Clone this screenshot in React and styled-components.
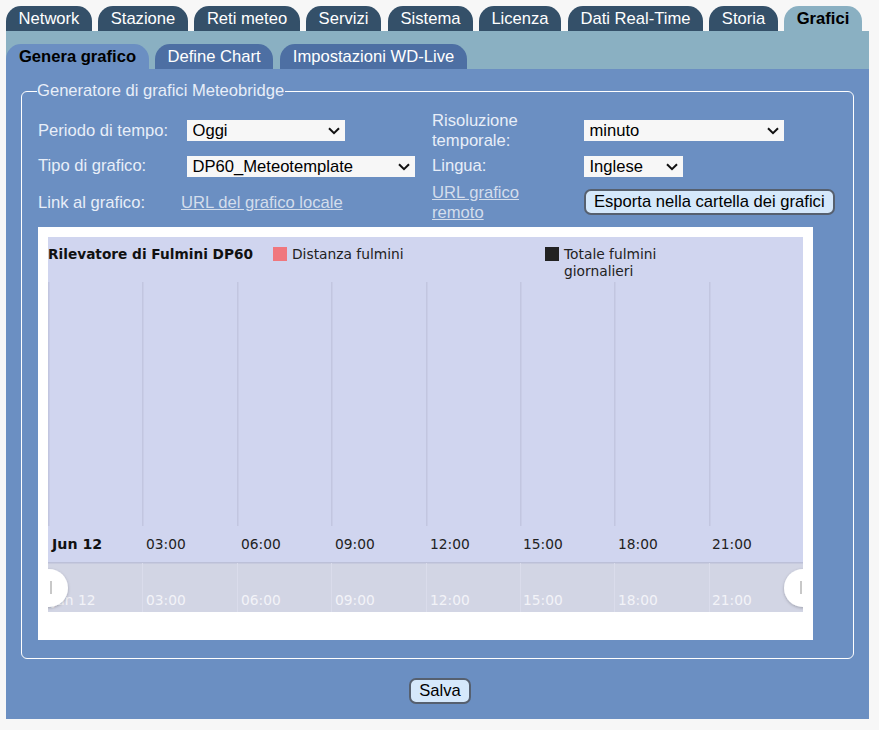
import React from "react";
import styled, { createGlobalStyle } from "styled-components";

const Global = createGlobalStyle`
  html, body { margin: 0; padding: 0; background: #f7f7f7; }
  body { font-family: "Liberation Sans", Arial, sans-serif; font-size: 16.6px; }
`;

const Page = styled.div`
  width: 863px;
  margin: 6px 0 0 6px;
  display: flex;
  flex-direction: column;
`;
const TabRow = styled.div`
  display: flex;
  gap: 6px;
  height: 25px;
`;
const Tab = styled.div`
  width: ${(p) => p.$w}px;
  margin-right: ${(p) => p.$mr || 0}px;
  height: 25px;
  line-height: 26px;
  text-align: center;
  white-space: nowrap;
  border-radius: 15px 15px 0 0;
  font-weight: ${(p) => (p.$active ? 700 : 400)};
  color: ${(p) => (p.$active ? "#000" : "#fff")};
  background: ${(p) => (p.$active ? p.$on : p.$off)};
`;
const TopPanel = styled.div`
  background: #8ab0c2;
  padding-top: 13px;
`;
const Content = styled.div`
  background: #6b8fc2;
  height: 650px;
  padding: 13px 15px 0;
  box-sizing: border-box;
`;
const Field = styled.fieldset`
  margin: 0;
  height: 577px;
  width: 833px;
  box-sizing: border-box;
  border: 1px solid #fff;
  border-radius: 6px;
  padding: 0 0 0 16px;
  color: #e8eef8;
`;
const Legend = styled.legend`
  padding: 0 1px 0 0;
  margin-left: -1px;
  line-height: 18px;
`;
const FormGrid = styled.div`
  display: grid;
  grid-template-columns: 149px 245px 152px 1fr;
  grid-template-rows: 41px 21px 40px;
  row-gap: 5px;
  margin-top: 10px;
  align-items: center;
  line-height: 20px;
`;
const Label = styled.div`
  padding-top: ${(p) => p.$top || 0}px;
  margin-top: ${(p) => p.$shift || 0}px;
`;
const SelectBox = styled.div`
  position: relative;
  width: ${(p) => p.$w}px;
  height: 21px;
`;
const Select = styled.select`
  appearance: none;
  display: block;
  width: 100%;
  height: 21px;
  border: none;
  border-radius: 0;
  background-color: #f7f7f7;
  color: #000;
  font: 16.6px "Liberation Sans", Arial, sans-serif;
  padding: 0 0 0 5.5px;
`;
const Chevron = styled.svg`
  position: absolute;
  right: 5px;
  top: 7px;
  pointer-events: none;
`;
const Link = styled.a`
  color: #d3ddec;
  text-decoration: underline;
  margin-left: ${(p) => p.$ml || 0}px;
`;
const LinkCell = styled.div`
  padding-top: 2px;
  max-width: ${(p) => p.$max || "none"};
`;
const Button = styled.button`
  height: 26px;
  padding: 0 8px;
  box-sizing: border-box;
  border: 2px solid #56606f;
  border-radius: 7px;
  background: #d5e8fb;
  color: #000;
  font: 16.6px "Liberation Sans", Arial, sans-serif;
  white-space: nowrap;
`;
const ChartFrame = styled.div`
  width: 775px;
  height: 413px;
  margin-top: 5px;
  padding: 10px;
  box-sizing: border-box;
  background: #fff;
`;
const ChartSvg = styled.svg`
  display: block;
  font-family: "DejaVu Sans", Verdana, sans-serif;
  font-size: 13.8px;
`;
const Footer = styled.div`
  display: flex;
  justify-content: center;
  padding: 19px 0 0 5px;
`;

const top = [
  ["Network", 86], ["Stazione", 90], ["Reti meteo", 106], ["Servizi", 75, 1], ["Sistema", 85],
  ["Licenza", 82, 1], ["Dati Real-Time", 135], ["Storia", 69], ["Grafici", 78],
];
const sub = [["Genera grafico", 143], ["Define Chart", 118, 1], ["Impostazioni WD-Live", 187]];
const grid = [94, 189, 283, 378, 472, 566, 661];
const times = [["03:00", 98], ["06:00", 193], ["09:00", 287], ["12:00", 382], ["15:00", 475], ["18:00", 570], ["21:00", 664]];

function Drop({ w, value }) {
  return (
    <SelectBox $w={w}>
      <Select defaultValue={value}><option>{value}</option></Select>
      <Chevron width="12" height="8" viewBox="0 0 12 8" fill="none" stroke="#111" strokeWidth="2">
        <path d="M1 1.2 L6 6.2 L11 1.2" />
      </Chevron>
    </SelectBox>
  );
}

function Chart() {
  return (
    <ChartSvg width="755" height="375" viewBox="0 0 755 375">
      <defs>
        <filter id="s" x="-50%" y="-50%" width="200%" height="200%">
          <feDropShadow dx="0" dy="1" stdDeviation="1.5" floodColor="#000" floodOpacity="0.25" />
        </filter>
      </defs>
      <rect width="755" height="325" fill="#d0d5ef" />
      <rect y="326" width="755" height="49" fill="#d2d5e4" />
      <rect y="325" width="755" height="1.5" fill="#bcc0d8" />
      <text x="0" y="22" fontWeight="700" fontSize="13.7" fill="#111">Rilevatore di Fulmini DP60</text>
      <rect x="225" y="10" width="14" height="14" fill="#f0777d" />
      <text x="244" y="22" fill="#222">Distanza fulmini</text>
      <rect x="497" y="10" width="14" height="14" fill="#222" />
      <text x="516" y="22" fill="#222">Totale fulmini</text>
      <text x="516" y="39" fill="#222">giornalieri</text>
      <rect x="0" y="45" width="1.5" height="244" fill="#c2c6e0" />
      {grid.map((x) => (
        <React.Fragment key={x}>
          <rect x={x} y="45" width="1.5" height="244" fill="#c2c6e0" />
          <rect x={x} y="326" width="1" height="49" fill="#dadceb" />
        </React.Fragment>
      ))}
      <text x="4" y="312" fontWeight="700" fontSize="14.2" fill="#111">Jun 12</text>
      <text x="4" y="368" fill="#f2f3f8">Jun 12</text>
      {times.map(([t, x]) => (
        <React.Fragment key={t}>
          <text x={x} y="312" fill="#222">{t}</text>
          <text x={x} y="368" fill="#f2f3f8">{t}</text>
        </React.Fragment>
      ))}
      <circle cx="1" cy="351" r="19" fill="#fff" filter="url(#s)" />
      <rect x="2" y="344" width="2" height="13" fill="#c8c8c8" />
      <circle cx="755" cy="351" r="19" fill="#fff" filter="url(#s)" />
      <rect x="752" y="344" width="2" height="13" fill="#c8c8c8" />
    </ChartSvg>
  );
}

export default function App() {
  return (
    <Page>
      <Global />
      <TabRow>
        {top.map(([t, w, mr]) => (
          <Tab key={t} $w={w} $mr={mr} $active={t === "Grafici"} $on="#8ab0c2" $off="#345069">{t}</Tab>
        ))}
      </TabRow>
      <TopPanel>
        <TabRow>
          {sub.map(([t, w, mr]) => (
            <Tab key={t} $w={w} $mr={mr} $active={t === "Genera grafico"} $on="#6b8fc2" $off="#4d6fa3">{t}</Tab>
          ))}
        </TabRow>
      </TopPanel>
      <Content>
        <Field>
          <Legend>Generatore di grafici Meteobridge</Legend>
          <FormGrid>
            <Label>Periodo di tempo:</Label>
            <Drop w={158} value="Oggi" />
            <Label>Risoluzione temporale:</Label>
            <Drop w={200} value="minuto" />
            <Label $shift={-1}>Tipo di grafico:</Label>
            <Drop w={228} value="DP60_Meteotemplate" />
            <Label $shift={-1}>Lingua:</Label>
            <Drop w={99} value="Inglese" />
            <Label $top={2}>Link al grafico:</Label>
            <LinkCell><Link href="#" $ml={-6}>URL del grafico locale</Link></LinkCell>
            <LinkCell $max="110px"><Link href="#">URL grafico remoto</Link></LinkCell>
            <div><Button>Esporta nella cartella dei grafici</Button></div>
          </FormGrid>
          <ChartFrame><Chart /></ChartFrame>
        </Field>
        <Footer><Button>Salva</Button></Footer>
      </Content>
    </Page>
  );
}
